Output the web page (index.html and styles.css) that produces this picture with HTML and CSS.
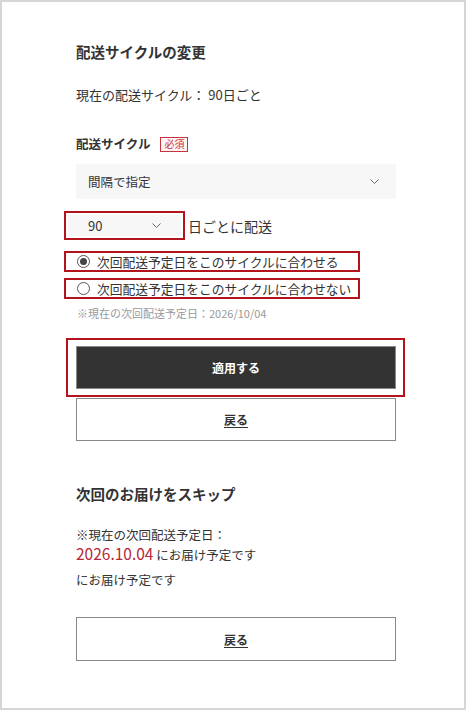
FILE: index.html
```html
<!DOCTYPE html>
<html lang="ja">
<head>
<meta charset="utf-8">
<title>配送サイクルの変更</title>
<link rel="stylesheet" href="styles.css">
</head>
<body>
<div class="frame">
  <section class="panel">
    <h2 class="title">配送サイクルの変更</h2>
    <p class="current">現在の配送サイクル： 90日ごと</p>

    <div class="field-label">配送サイクル<span class="badge">必須</span></div>
    <div class="select select-wide">
      <span>間隔で指定</span>
      <svg class="chev" width="9" height="5" viewBox="0 0 9 5"><polyline points="0.5,0.5 4.5,4.5 8.5,0.5" fill="none" stroke="#666" stroke-width="1"/></svg>
    </div>

    <div class="interval-row">
      <div class="hl hl-interval">
        <div class="select select-small">
          <span>90</span>
          <svg class="chev" width="9" height="5" viewBox="0 0 9 5"><polyline points="0.5,0.5 4.5,4.5 8.5,0.5" fill="none" stroke="#666" stroke-width="1"/></svg>
        </div>
      </div>
      <span class="interval-text">日ごとに配送</span>
    </div>

    <div class="hl hl-radio first">
      <span class="radio checked"></span>
      <span>次回配送予定日をこのサイクルに合わせる</span>
    </div>
    <div class="hl hl-radio second">
      <span class="radio"></span>
      <span>次回配送予定日をこのサイクルに合わせない</span>
    </div>
    <p class="note">※現在の次回配送予定日：2026/10/04</p>

    <div class="hl hl-apply">
      <div class="btn btn-dark">適用する</div>
    </div>
    <div class="btn btn-outline"><span class="ul">戻る</span></div>

    <h2 class="title skip-title">次回のお届けをスキップ</h2>
    <p class="skip-info">※現在の次回配送予定日：<br><span class="date">2026.10.04</span> にお届け予定です</p>
    <p class="skip-extra">にお届け予定です</p>

    <div class="btn btn-outline last"><span class="ul">戻る</span></div>
  </section>
</div>
</body>
</html>
```

FILE: styles.css
```css
* { box-sizing: border-box; }
html, body { margin: 0; padding: 0; background: #fff; }
body {
  font-family: "Noto Sans CJK JP", "Noto Sans", sans-serif;
  color: #333;
}
.frame {
  width: 466px;
  height: 710px;
  border: 2px solid #d6d6d6;
  overflow: hidden;
}
.panel {
  width: 320px;
  margin-left: 74px;
  padding-top: 40px;
  display: flex;
  flex-direction: column;
}
.title {
  margin: 0;
  font-size: 14.5px;
  line-height: 20px;
  font-weight: 700;
  color: #333;
}
.current {
  margin: 23px 0 0;
  font-size: 13px;
  line-height: 20px;
}
.field-label {
  margin-top: 29px;
  font-size: 12.5px;
  line-height: 20px;
  font-weight: 700;
  display: flex;
  align-items: center;
}
.badge {
  margin-left: 10px;
  font-size: 10px;
  line-height: 12px;
  font-weight: 400;
  color: #c8323c;
  border: 1px solid #c8323c;
  background: #fff4f4;
  padding: 0 3px;
  height: 15px;
  display: inline-flex;
  align-items: center;
}
.select {
  display: flex;
  align-items: center;
  justify-content: space-between;
  background: #f7f7f7;
  font-size: 12.5px;
}
.select-wide {
  margin-top: 10px;
  height: 35px;
  padding: 0 17px 0 12px;
}
.chev { display: block; }
.interval-row {
  margin-top: 12px;
  display: flex;
  align-items: center;
}
.hl {
  border: 2px solid #b3141c;
}
.hl-interval {
  margin-left: -12px;
  width: 121px;
  height: 29px;
  padding: 2px;
}
.select-small {
  height: 100%;
  padding: 0 20px 0 20px;
  font-size: 13px;
}
.interval-text {
  margin-left: 3px;
  font-size: 14px;
  line-height: 20px;
}
.hl-radio {
  margin-left: -12px;
  width: 296px;
  height: 21px;
  display: flex;
  align-items: center;
  padding-left: 11px;
  font-size: 12.75px;
  line-height: 17px;
  white-space: nowrap;
}
.hl-radio.first { margin-top: 11px; }
.hl-radio.second { margin-top: 6px; }
.radio {
  width: 13px;
  height: 13px;
  border: 1px solid #555;
  border-radius: 50%;
  margin-right: 7px;
  flex: none;
  display: flex;
  align-items: center;
  justify-content: center;
  background: #fff;
}
.radio.checked::after {
  content: "";
  width: 7px;
  height: 7px;
  border-radius: 50%;
  background: #444;
}
.note {
  margin: 6px 0 0 1px;
  font-size: 11px;
  line-height: 16px;
  color: #999;
}
.hl-apply {
  margin: 17px -9px 0 -10px;
  padding: 6px 7px 6px 8px;
}
.btn {
  height: 43px;
  display: flex;
  align-items: center;
  justify-content: center;
  font-size: 12px;
  font-weight: 700;
}
.btn-dark {
  background: #333;
  color: #fff;
  border: 1px solid #888;
}
.btn-outline {
  margin-top: 1px;
  border: 1px solid #888;
  background: #fff;
  color: #333;
}
.btn-outline.last {
  margin-top: 28px;
  height: 44px;
}
.ul {
  text-decoration: underline;
  text-underline-offset: 2px;
}
.skip-title { margin-top: 43px; }
.skip-info {
  margin: 21px 0 0;
  font-size: 12.5px;
  line-height: 19px;
}
.date {
  font-size: 15.5px;
  color: #b5283a;
}
.skip-extra {
  margin: 6px 0 0;
  font-size: 12.5px;
  line-height: 19px;
}
```
